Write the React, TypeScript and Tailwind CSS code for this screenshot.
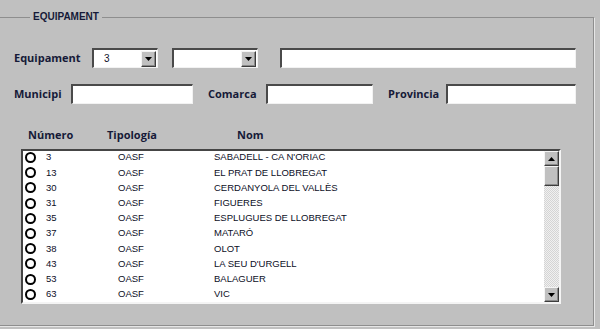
const rows = [
  { num: '3', tipo: 'OASF', nom: "SABADELL - CA N'ORIAC" },
  { num: '13', tipo: 'OASF', nom: 'EL PRAT DE LLOBREGAT' },
  { num: '30', tipo: 'OASF', nom: 'CERDANYOLA DEL VALLÈS' },
  { num: '31', tipo: 'OASF', nom: 'FIGUERES' },
  { num: '35', tipo: 'OASF', nom: 'ESPLUGUES DE LLOBREGAT' },
  { num: '37', tipo: 'OASF', nom: 'MATARÓ' },
  { num: '38', tipo: 'OASF', nom: 'OLOT' },
  { num: '43', tipo: 'OASF', nom: "LA SEU D'URGELL" },
  { num: '53', tipo: 'OASF', nom: 'BALAGUER' },
  { num: '63', tipo: 'OASF', nom: 'VIC' },
]

const label = "font-['Open_Sans',sans-serif] text-[11px] font-bold text-[#161a38]"
const field =
  'h-[20px] bg-white border-t-2 border-l-2 border-b border-r border-t-[#4a4a4a] border-l-[#4a4a4a] border-b-[#f2f2f2] border-r-[#f2f2f2]'
const bevel =
  'bg-[#c0c0c0] border border-t-[#f4f4f4] border-l-[#f4f4f4] border-b-[#3c3c3c] border-r-[#3c3c3c] shadow-[inset_-1px_-1px_0_#8a8a8a] flex items-center justify-center'

function Arrow({ up }: { up?: boolean }) {
  return (
    <svg width="7" height="4" viewBox="0 0 7 4">
      <path d={up ? 'M0 4 L3.5 0 L7 4 Z' : 'M0 0 L7 0 L3.5 4 Z'} fill="#000" />
    </svg>
  )
}

function Combo({ width, value }: { width: string; value?: string }) {
  return (
    <div className={`${field} ${width} flex items-center justify-between pr-px`}>
      <span className="pl-[10px] font-['Liberation_Sans',sans-serif] text-[10px] text-[#10122a]">{value}</span>
      <div className={`${bevel} w-[15px] h-[16px]`}>
        <Arrow />
      </div>
    </div>
  )
}

export default function App() {
  return (
    <div className="w-[600px] h-[329px] bg-[#c0c0c0] overflow-hidden">
      <fieldset className="ml-[-10px] mt-[11px] w-[604px] h-[315px] border border-[#8e8e8e] shadow-[1px_1px_0_#e6e6e6] pl-[23px]">
        <legend className="ml-[16px] px-[3px] font-['Liberation_Sans',sans-serif] text-[10px] leading-[12px] font-bold text-[#161a38]">
          EQUIPAMENT
        </legend>

        <div className="mt-[25px] flex items-center">
          <span className={`${label} w-[78px]`}>Equipament</span>
          <Combo width="w-[66px]" value="3" />
          <div className="w-[14px]" />
          <Combo width="w-[86px]" />
          <div className="w-[22px]" />
          <div className={`${field} w-[296px]`} />
        </div>

        <div className="mt-[16px] flex items-center">
          <span className={`${label} w-[57px]`}>Municipi</span>
          <div className={`${field} w-[122px]`} />
          <span className={`${label} ml-[15px] w-[58px]`}>Comarca</span>
          <div className={`${field} w-[107px]`} />
          <span className={`${label} ml-[15px] w-[58px]`}>Provincia</span>
          <div className={`${field} w-[130px]`} />
        </div>

        <div className={`mt-[24px] h-[14px] flex items-center ${label}`}>
          <span className="pl-[14px] w-[93px]">Número</span>
          <span className="w-[130px]">Tipología</span>
          <span>Nom</span>
        </div>

        <div className="mt-[7px] ml-[7px] w-[540px] h-[155px] flex border-t-2 border-l-2 border-b-2 border-r-2 border-t-[#454545] border-l-[#454545] border-b-[#f4f4f4] border-r-[#f4f4f4] bg-white">
          <div className="flex-1 mt-[-1px] font-['Liberation_Sans',sans-serif] text-[9.5px] text-[#0c0e26]">
            {rows.map((r) => (
              <div key={r.num} className="h-[15.2px] flex items-center">
                <span className="ml-[2px] w-[11px] h-[11px] rounded-full border-2 border-black bg-white" />
                <span className="ml-[10px] w-[72px]">{r.num}</span>
                <span className="w-[96px]">{r.tipo}</span>
                <span>{r.nom}</span>
              </div>
            ))}
          </div>
          <div className="w-[15px] flex flex-col bg-[repeating-conic-gradient(#d4d4d4_0%_25%,#f0f0f0_0%_50%)] bg-[length:2px_2px]">
            <div className={`${bevel} h-[15px]`}>
              <Arrow up />
            </div>
            <div className={`${bevel} h-[20px]`} />
            <div className="flex-1" />
            <div className={`${bevel} h-[15px]`}>
              <Arrow />
            </div>
          </div>
        </div>
      </fieldset>
    </div>
  )
}
